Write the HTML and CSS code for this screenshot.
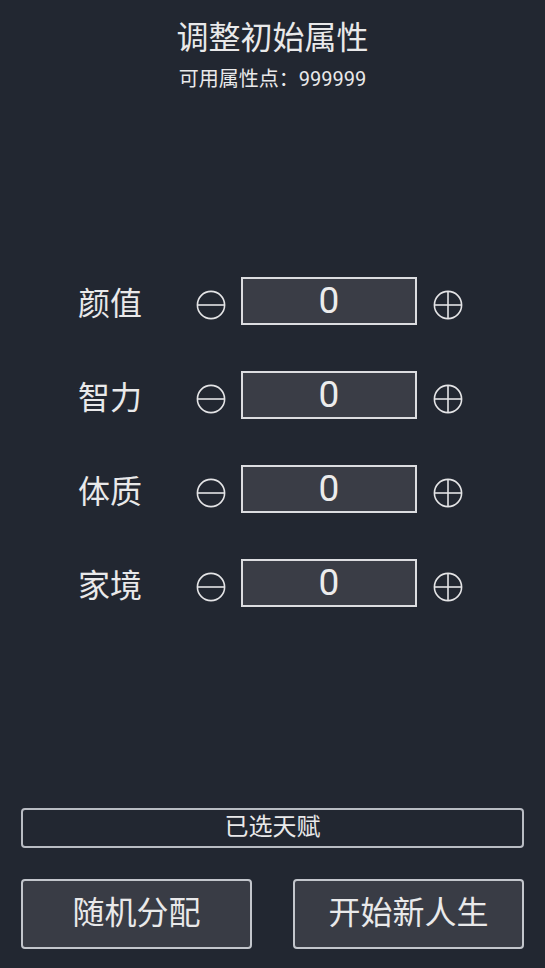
FILE: index.html
```html
<!DOCTYPE html>
<html lang="zh">
<head>
<meta charset="utf-8">
<title>调整初始属性</title>
<link rel="stylesheet" href="styles.css">
</head>
<body>
<div class="page">
  <header class="head">
    <div class="title">调整初始属性</div>
    <div class="sub">可用属性点：999999</div>
  </header>

  <section class="props">
    <div class="row">
      <div class="label">颜值</div>
      <svg class="ico minus" viewBox="0 0 30 30"><circle cx="15" cy="15" r="13.6"/><line x1="1.6" y1="15" x2="28.4" y2="15"/></svg>
      <div class="val">0</div>
      <svg class="ico plus" viewBox="0 0 30 30"><circle cx="15" cy="15" r="13.6"/><line x1="1.6" y1="15" x2="28.4" y2="15"/><line x1="15" y1="1.6" x2="15" y2="28.4"/></svg>
    </div>
    <div class="row">
      <div class="label">智力</div>
      <svg class="ico minus" viewBox="0 0 30 30"><circle cx="15" cy="15" r="13.6"/><line x1="1.6" y1="15" x2="28.4" y2="15"/></svg>
      <div class="val">0</div>
      <svg class="ico plus" viewBox="0 0 30 30"><circle cx="15" cy="15" r="13.6"/><line x1="1.6" y1="15" x2="28.4" y2="15"/><line x1="15" y1="1.6" x2="15" y2="28.4"/></svg>
    </div>
    <div class="row">
      <div class="label">体质</div>
      <svg class="ico minus" viewBox="0 0 30 30"><circle cx="15" cy="15" r="13.6"/><line x1="1.6" y1="15" x2="28.4" y2="15"/></svg>
      <div class="val">0</div>
      <svg class="ico plus" viewBox="0 0 30 30"><circle cx="15" cy="15" r="13.6"/><line x1="1.6" y1="15" x2="28.4" y2="15"/><line x1="15" y1="1.6" x2="15" y2="28.4"/></svg>
    </div>
    <div class="row">
      <div class="label">家境</div>
      <svg class="ico minus" viewBox="0 0 30 30"><circle cx="15" cy="15" r="13.6"/><line x1="1.6" y1="15" x2="28.4" y2="15"/></svg>
      <div class="val">0</div>
      <svg class="ico plus" viewBox="0 0 30 30"><circle cx="15" cy="15" r="13.6"/><line x1="1.6" y1="15" x2="28.4" y2="15"/><line x1="15" y1="1.6" x2="15" y2="28.4"/></svg>
    </div>
  </section>

  <div class="talents">已选天赋</div>

  <div class="actions">
    <div class="btn">随机分配</div>
    <div class="btn">开始新人生</div>
  </div>
</div>
</body>
</html>
```

FILE: styles.css
```css
html, body {
  margin: 0;
  padding: 0;
  background: #222731;
}
body {
  font-family: Roboto, "Noto Sans CJK SC", sans-serif;
  color: #e9e9ea;
}
.page {
  width: 545px;
  height: 968px;
  display: flex;
  flex-direction: column;
  box-sizing: border-box;
  padding-top: 18px;
}
.head {
  display: flex;
  flex-direction: column;
  align-items: center;
  gap: 8px;
}
.title {
  font-size: 32px;
  line-height: 40px;
}
.sub {
  font-size: 20px;
  line-height: 26px;
}
.props {
  margin-top: 185px;
  display: flex;
  flex-direction: column;
  gap: 46px;
  padding-left: 78px;
}
.row {
  display: flex;
  align-items: center;
  height: 48px;
}
.label {
  width: 64px;
  font-family: "Noto Sans CJK SC", sans-serif;
  font-size: 32px;
  line-height: 40px;
  margin-right: 54px;
}
.ico {
  width: 30px;
  height: 30px;
  margin-top: 7px;
  fill: none;
  stroke: #e4e4e6;
  stroke-width: 1.6;
}
.val {
  width: 176px;
  height: 48px;
  box-sizing: border-box;
  margin: 0 16px 0 15px;
  border: 2px solid #dcdde0;
  background: #3a3d46;
  text-align: center;
  font-size: 37px;
  line-height: 43px;
  color: #ececec;
}
.talents {
  margin: 201px 21px 0;
  height: 40px;
  box-sizing: border-box;
  border: 2px solid #b9bcc3;
  border-radius: 4px;
  text-align: center;
  font-size: 24px;
  line-height: 35px;
}
.actions {
  margin: 31px 21px 0;
  display: flex;
  justify-content: space-between;
}
.btn {
  width: 231px;
  height: 70px;
  box-sizing: border-box;
  border: 2px solid #c3c6cc;
  border-radius: 4px;
  background: #393c45;
  text-align: center;
  font-size: 32px;
  line-height: 65px;
}
```
